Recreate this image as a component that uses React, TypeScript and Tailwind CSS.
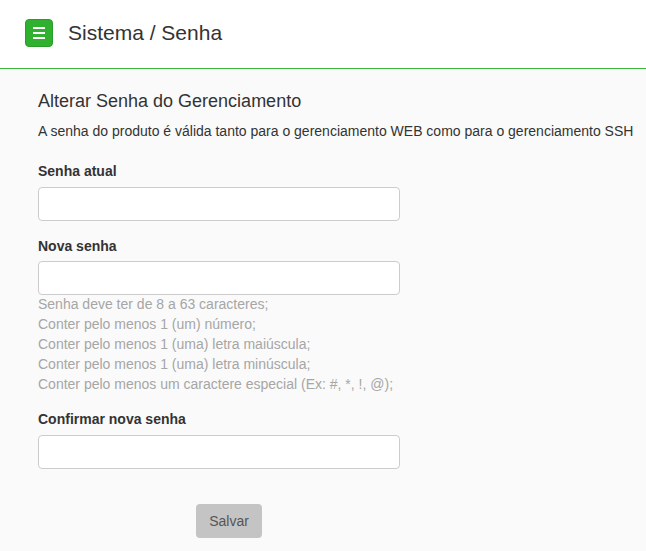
export default function App() {
  const rules = [
    "Senha deve ter de 8 a 63 caracteres;",
    "Conter pelo menos 1 (um) número;",
    "Conter pelo menos 1 (uma) letra maiúscula;",
    "Conter pelo menos 1 (uma) letra minúscula;",
    "Conter pelo menos um caractere especial (Ex: #, *, !, @);",
  ];

  return (
    <div
      className="min-h-[551px] bg-[#fafafa] text-[#333] text-[14px]"
      style={{ fontFamily: '"Liberation Sans", Arial, sans-serif' }}
    >
      <header className="h-[69px] bg-white border-b border-[#3ab53a] flex items-center pl-[25px]">
        <button className="w-[28px] h-[28px] rounded-[4px] bg-[#2fb12f] border border-[#2a9c2a] flex flex-col items-center justify-center gap-[3px] -mt-[2px]">
          <span className="block w-[12px] h-[2px] bg-white" />
          <span className="block w-[12px] h-[2px] bg-white" />
          <span className="block w-[12px] h-[2px] bg-white" />
        </button>
        <h1 className="ml-[15px] text-[21px] text-[#333] -mt-[3px]">Sistema / Senha</h1>
      </header>

      <main className="pl-[38px] pt-[22px] pb-[13px]">
        <h4 className="text-[18px] leading-[20px] mb-[10px]">Alterar Senha do Gerenciamento</h4>
        <p className="leading-[20px] mb-[20px] whitespace-nowrap">
          A senha do produto é válida tanto para o gerenciamento WEB como para o gerenciamento SSH
        </p>

        <div className="mb-[15px]">
          <label className="block font-bold leading-[20px] mb-[6px]">Senha atual</label>
          <input type="password" className="block w-[362px] h-[34px] bg-white border border-[#ccc] rounded-[4px]" />
        </div>

        <div className="mb-[15px]">
          <label className="block font-bold leading-[20px] mb-[5px]">Nova senha</label>
          <input type="password" className="block w-[362px] h-[34px] bg-white border border-[#ccc] rounded-[4px]" />
          <div className="text-[#a6a6a6] leading-[20px] -mt-[1px]">
            {rules.map((r) => (
              <div key={r}>{r}</div>
            ))}
          </div>
        </div>

        <div className="mb-[35px]">
          <label className="block font-bold leading-[20px] mb-[6px]">Confirmar nova senha</label>
          <input type="password" className="block w-[362px] h-[34px] bg-white border border-[#ccc] rounded-[4px]" />
        </div>

        <div className="pl-[158px]">
          <button className="w-[66px] h-[34px] rounded-[4px] bg-[#c4c4c4] text-[#555] text-[14px]">Salvar</button>
        </div>
      </main>
    </div>
  );
}
